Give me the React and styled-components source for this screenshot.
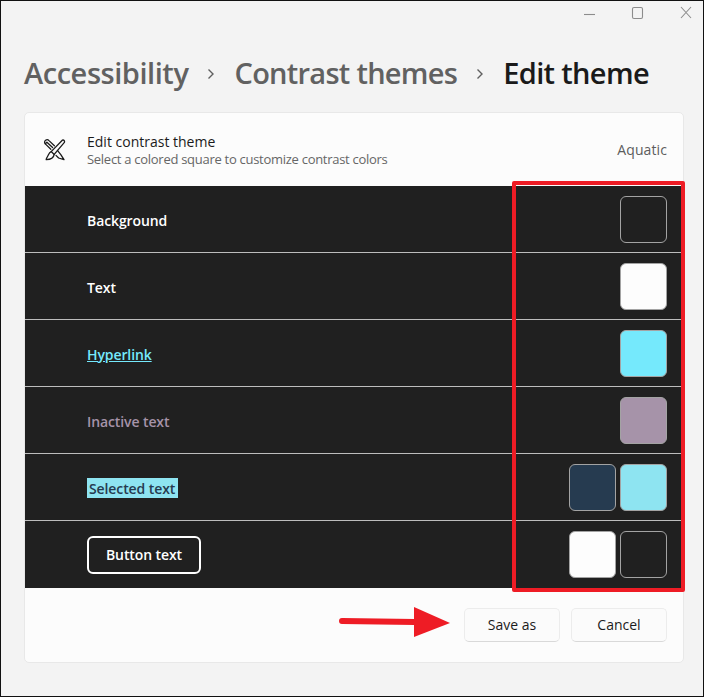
import React from 'react';
import styled, { createGlobalStyle } from 'styled-components';

const GlobalStyle = createGlobalStyle`
  html, body {
    margin: 0;
    padding: 0;
  }
  * {
    box-sizing: border-box;
  }
`

const Window = styled.div`
  position: relative;
  width: 704px;
  height: 697px;
  background-color: #f3f3f3;
  border: 1px solid #111;
  font-family: "Open Sans", "Noto Sans", sans-serif;
  overflow: hidden;
`

const TitleBar = styled.div`
  height: 22px;
  display: flex;
  justify-content: flex-end;
  align-items: center;
  padding: 0 11px 0 0;
`

const Crumbs = styled.div`
  height: 89px;
  padding: 10px 0 0 23px;
  display: flex;
  align-items: center;
  font-size: 29px;
  font-weight: 600;
  white-space: nowrap;
`

const Crumb = styled.span`
  color: ${props => props.$current ? '#1a1a1a' : '#616161'};
  letter-spacing: ${props => props.$spacing};
`

const Chevron = styled.svg`
  margin: 2px 19px 0 19px;
  flex: none;
`

const Card = styled.div`
  margin-left: 23px;
  width: 660px;
  height: 551px;
  background-color: #fcfcfc;
  border: 1px solid #e8e8e8;
  border-radius: 5px;
  display: flex;
  flex-direction: column;
`

const CardHeader = styled.div`
  height: 73px;
  display: flex;
  align-items: center;
  padding: 0 16px 0 18px;
`

const HeaderText = styled.div`
  flex: 1;
  margin-left: 20px;
  padding-top: 2px;
  display: flex;
  flex-direction: column;
`

const HeaderTitle = styled.div`
  font-size: 14px;
  line-height: 18px;
  color: #1b1b1b;
`

const HeaderSub = styled.div`
  font-size: 13px;
  line-height: 17px;
  letter-spacing: -0.28px;
  color: #666;
`

const ThemeName = styled.div`
  font-size: 14px;
  letter-spacing: 0.1px;
  color: #5d5d5d;
`

const Rows = styled.div`
  display: flex;
  flex-direction: column;
  background-color: #202020;
`

const Row = styled.div`
  height: 67px;
  display: flex;
  align-items: center;
  justify-content: space-between;
  padding: 0 16px 0 62px;
  border-bottom: ${props => props.$last ? 'none' : '1px solid #bdbdbd'};
`

const Label = styled.span`
  font-size: 14px;
  font-weight: 600;
  letter-spacing: -0.1px;
  padding-top: 2px;
  color: #fff;
`

const LinkLabel = styled(Label)`
  color: #75e9fc;
  text-decoration: underline;
`

const InactiveLabel = styled(Label)`
  color: #a693a9;
`

const SelectedLabel = styled(Label)`
  background-color: #8ee4f1;
  color: #263b50;
  line-height: 20px;
  margin-top: 2px;
  padding: 1px 3px 0 2px;
  height: 20px;
`

const ButtonLabel = styled(Label)`
  width: 114px;
  height: 38px;
  padding: 0;
  display: flex;
  align-items: center;
  justify-content: center;
  border: 2px solid #fff;
  border-radius: 6px;
`

const Swatches = styled.div`
  display: flex;
  gap: 4px;
`

const Swatch = styled.div`
  width: 47px;
  height: 47px;
  border-radius: 6px;
  border: 1px solid #a3a3a3;
  background-color: ${props => props.$color};
`

const Actions = styled.div`
  flex: 1;
  display: flex;
  justify-content: flex-end;
  align-items: center;
  gap: 11px;
  padding: 0 16px 1px 0;
`

const ActionButton = styled.div`
  width: 96px;
  height: 34px;
  display: flex;
  align-items: center;
  justify-content: center;
  font-size: 14px;
  color: #1b1b1b;
  background-color: #fbfbfb;
  border: 1px solid #ececec;
  border-bottom-color: #d9d9d9;
  border-radius: 5px;
`

const Highlight = styled.div`
  position: absolute;
  left: 511px;
  top: 180px;
  width: 173px;
  height: 411px;
  border: 4px solid #ee1c25;
  border-radius: 2px;
`

const Arrow = styled.svg`
  position: absolute;
  left: 338px;
  top: 606px;
`

const PenBrushIcon = () => (
  <svg width="24" height="24" viewBox="0 0 24 24" fill="none" stroke="#1b1b1b" strokeWidth="1.3" strokeLinejoin="round" strokeLinecap="round">
    <path d="M19.3 2.2 C20.8 1.6 22 2.8 21.4 4.4 L11.2 16.4 L8.2 13.6 Z" />
    <path d="M8.2 13.6 C5.6 14.4 5.6 17.4 3.9 19.6 C3.2 20.7 2.8 21.4 3.2 21.7 C6.6 21.6 10.6 20.6 11.2 16.4" />
    <path d="M9.6 9.6 L3.9 4.3 L2.3 5.9 C1.2 4.8 1.4 3.2 2.6 2.3 C3.8 1.4 5.2 1.7 6 2.6 L11.4 7.8" />
    <path d="M2.3 5.9 L7.8 11.2" />
    <path d="M14.4 12.4 L17.8 16.6 L21 21.7 L15.6 20 L13 17.4" />
  </svg>
)

const rows = [
  { label: <Label>Background</Label>, colors: ['#202020'] },
  { label: <Label>Text</Label>, colors: ['#fdfdfd'] },
  { label: <LinkLabel>Hyperlink</LinkLabel>, colors: ['#75e9fc'] },
  { label: <InactiveLabel>Inactive text</InactiveLabel>, colors: ['#a693a9'] },
  { label: <SelectedLabel>Selected text</SelectedLabel>, colors: ['#263b50', '#8ee4f1'] },
  { label: <ButtonLabel>Button text</ButtonLabel>, colors: ['#fdfdfd', '#202020'] },
]

const Chev = () => (
  <Chevron width="8" height="12" viewBox="0 0 8 12" fill="none" stroke="#5f5f5f" strokeWidth="1.4">
    <path d="M1.5 1.5 L6 6 L1.5 10.5" />
  </Chevron>
)

const App = () => {
  return (
    <Window>
      <GlobalStyle />
      <TitleBar>
        <svg width="108" height="16" viewBox="0 0 108 16" fill="none" stroke="#8c8c8c" strokeWidth="1.1">
          <path d="M0 10.5 H11" />
          <rect x="48.5" y="3.5" width="10" height="11" rx="1.5" />
          <path d="M97 3 L107 14 M107 3 L97 14" />
        </svg>
      </TitleBar>
      <Crumbs>
        <Crumb $spacing="-0.45px">Accessibility</Crumb>
        <Chev />
        <Crumb $spacing="-0.72px">Contrast themes</Crumb>
        <Chev />
        <Crumb $current $spacing="-0.65px">Edit theme</Crumb>
      </Crumbs>
      <Card>
        <CardHeader>
          <PenBrushIcon />
          <HeaderText>
            <HeaderTitle>Edit contrast theme</HeaderTitle>
            <HeaderSub>Select a colored square to customize contrast colors</HeaderSub>
          </HeaderText>
          <ThemeName>Aquatic</ThemeName>
        </CardHeader>
        <Rows>
          {rows.map((row, i) => (
            <Row key={i} $last={i === rows.length - 1}>
              {row.label}
              <Swatches>
                {row.colors.map((c, j) => <Swatch key={j} $color={c} />)}
              </Swatches>
            </Row>
          ))}
        </Rows>
        <Actions>
          <ActionButton>Save as</ActionButton>
          <ActionButton>Cancel</ActionButton>
        </Actions>
      </Card>
      <Highlight />
      <Arrow width="112" height="32" viewBox="0 0 112 32">
        <path d="M3 14 L76 15" stroke="#ee1c25" strokeWidth="6" strokeLinecap="round" />
        <path d="M75 0 L111 16 L75 30 Z" fill="#ee1c25" />
      </Arrow>
    </Window>
  )
}

export default App
